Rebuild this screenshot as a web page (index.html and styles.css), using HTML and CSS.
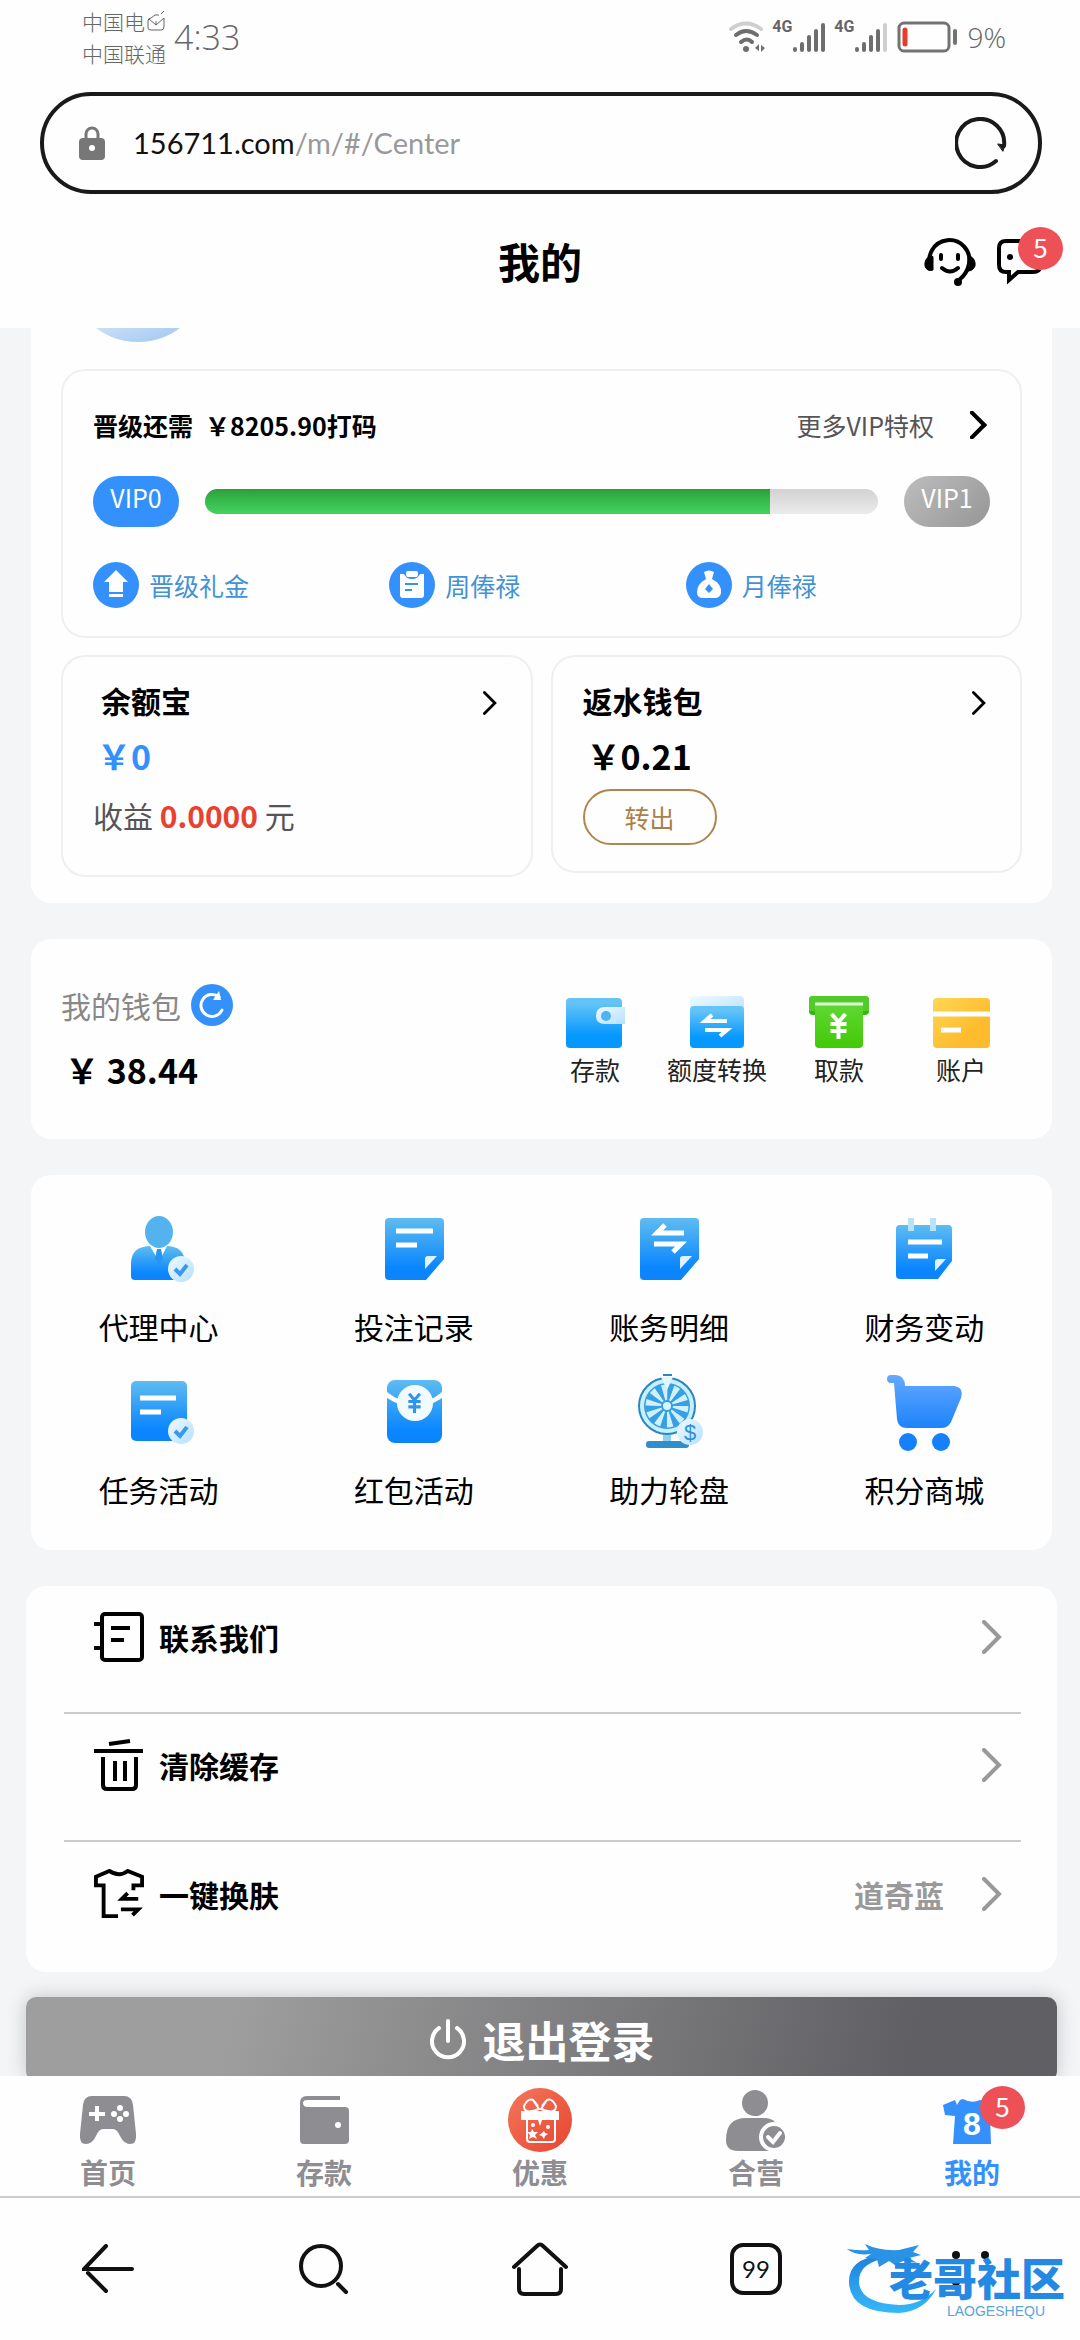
FILE: index.html
```
<!DOCTYPE html>
<html lang="zh-CN">
<head>
    <meta charset="UTF-8">
    <meta name="viewport" content="width=device-width, initial-scale=1.0">
    <title>我的</title>
    <link rel="stylesheet" href="styles.css">
</head>
<body>
    <!-- shared gradients and symbols -->
    <svg class="defs" width="0" height="0" aria-hidden="true">
        <defs>
            <linearGradient id="blue" x1="0" y1="0" x2="0" y2="1">
                <stop offset="0" stop-color="#5ebcf0"/>
                <stop offset="0.8" stop-color="#0a86ff"/>
                <stop offset="1" stop-color="#0c84fa"/>
            </linearGradient>
            <linearGradient id="sky" x1="0" y1="0" x2="0" y2="1">
                <stop offset="0.1" stop-color="#64c4f6"/>
                <stop offset="0.75" stop-color="#0598ff"/>
            </linearGradient>
            <linearGradient id="pale" x1="0" y1="0" x2="1" y2="1">
                <stop offset="0" stop-color="#f0faff"/>
                <stop offset="1" stop-color="#b4e0fc"/>
            </linearGradient>
            <linearGradient id="green" x1="0" y1="0" x2="0" y2="1">
                <stop offset="0" stop-color="#62d836"/>
                <stop offset="1" stop-color="#41c906"/>
            </linearGradient>
            <linearGradient id="gold" x1="0" y1="0" x2="1" y2="1">
                <stop offset="0" stop-color="#ffd655"/>
                <stop offset="0.7" stop-color="#fdbb2d"/>
            </linearGradient>
            <linearGradient id="cart" x1="0" y1="0" x2="0" y2="1">
                <stop offset="0" stop-color="#64a9ff"/>
                <stop offset="1" stop-color="#1d83fb"/>
            </linearGradient>
            <linearGradient id="coral" x1="0" y1="0" x2="1" y2="1">
                <stop offset="0" stop-color="#f2775c"/>
                <stop offset="1" stop-color="#e8452f"/>
            </linearGradient>
            <linearGradient id="mark" x1="0" y1="0" x2="0" y2="1">
                <stop offset="0" stop-color="#2080dc"/>
                <stop offset="1" stop-color="#35b8fa"/>
            </linearGradient>
        </defs>
        <symbol id="chevron" viewBox="0 0 20 34">
            <path d="M2 2L17 17L2 32" fill="none" stroke="currentColor" stroke-linecap="round"/>
        </symbol>
        <symbol id="yen" viewBox="0 0 18 26">
            <path d="M2 1L9 9L16 1M9 9V26M1 11H17M1 18H17" fill="none" stroke="currentColor" stroke-width="4"/>
        </symbol>
    </svg>

    <header class="status-bar">
        <div class="carriers">
            <div class="carrier">中国电
                <svg width="20" height="22" viewBox="0 0 20 22" fill="none" stroke="currentColor" stroke-width="1"><path d="M5 8Q2 8 2 11V18Q2 20 5 20H15Q18 20 18 17V8L10 15L3 9M5 8L9 5H13M15 4L18 1M10 15V11"/></svg>
            </div>
            <div class="carrier">中国联通</div>
        </div>
        <time class="clock">4:33</time>
        <div class="status-icons">
            <svg width="38" height="32" viewBox="0 0 38 32" fill="none" stroke-width="4" stroke-linecap="round">
                <path d="M3 8Q18-3 33 8" stroke="#cfcfcf"/>
                <path d="M8 14Q18 6 29 14M13 21Q19 16 24 21" stroke="#6e6e6e"/>
                <circle cx="18" cy="28" r="3" fill="#6e6e6e"/>
                <path d="M27 27L31 23V30ZM33 24L37 27L33 31Z" fill="#6e6e6e"/>
            </svg>
            <span class="net">4G</span>
            <svg width="34" height="32" viewBox="0 0 34 32" stroke="#6e6e6e" stroke-width="4" stroke-linecap="round"><path d="M3 28V29M10 23V29M17 16V29M24 10V29M31 4V29"/></svg>
            <span class="net net-2">4G</span>
            <svg width="34" height="32" viewBox="0 0 34 32" stroke="#6e6e6e" stroke-width="4" stroke-linecap="round"><path d="M3 28V29M10 23V29M17 16V29M24 10V29"/><path d="M31 4V29" stroke="#cfcfcf"/></svg>
            <svg class="battery" width="60" height="32" viewBox="0 0 60 32" fill="none" stroke-linecap="round">
                <rect x="2" y="2" width="50" height="28" rx="5" stroke="#737373" stroke-width="3"/>
                <path d="M58 10V22" stroke="#737373" stroke-width="4"/>
                <path d="M8 9V23" stroke="#e93a2c" stroke-width="5"/>
            </svg>
            <span class="battery-text">9%</span>
        </div>
    </header>

    <div class="address-row">
        <div class="address-bar">
            <svg width="26" height="36" viewBox="0 0 26 36"><path d="M7 14V9a6 6 0 0 1 12 0V14" fill="none" stroke="#777" stroke-width="3"/><rect y="13" width="26" height="22" rx="4" fill="#777"/><circle cx="13" cy="23" r="3" fill="#fff"/></svg>
            <button type="button" class="url">156711.com<span class="url-path">/m/#/Center</span></button>
            <button type="button" class="icon-button" aria-label="刷新">
                <svg width="52" height="52" viewBox="0 0 52 52" fill="none" stroke="#1a1a1a" stroke-width="4" stroke-linecap="round"><path d="M41 44A24 24 0 1 1 49 29"/><path d="M43 27L50 28L48 34Z" fill="#1a1a1a" stroke-width="1"/></svg>
            </button>
        </div>
    </div>

    <div class="page-header">
        <h1>我的</h1>
        <nav class="header-actions">
            <a href="#service" aria-label="客服">
                <svg width="52" height="52" viewBox="0 0 52 52" fill="none" stroke="#000" stroke-width="4" stroke-linecap="round">
                    <path d="M7 33A20 20 0 1 1 45 29Q43 39 35 45"/>
                    <path d="M6 21Q0 24 1 31Q3 37 9 35V22ZM46 21Q52 24 51 31Q49 36 44 36V22Z" fill="#000" stroke-width="1"/>
                    <circle cx="34" cy="47" r="4" fill="#000" stroke="none"/>
                    <path d="M17 20V24M34 20V24M18 33Q26 40 34 33"/>
                </svg>
            </a>
            <a href="#messages" class="has-badge" aria-label="消息">
                <svg width="46" height="48" viewBox="0 0 46 48" fill="none" stroke="#000" stroke-width="4"><path d="M40 4H9Q2 4 2 11V28Q2 35 9 35H12V43L21 35H36Q43 35 43 29"/><circle cx="13" cy="20" r="3" fill="#000" stroke="none"/></svg>
                <span class="badge">5</span>
            </a>
        </nav>
    </div>

    <main class="content">
        <section class="card profile">
            <div class="avatar-strip"><div class="avatar"></div></div>

            <div class="panel vip">
                <div class="vip-head">
                    <strong>晋级还需<span class="needed">￥8205.90打码</span></strong>
                    <a href="#vip" class="vip-more">更多VIP特权 <svg class="chevron-vip" width="17" height="28"><use href="#chevron"/></svg></a>
                </div>
                <div class="vip-progress">
                    <span class="level">VIP0</span>
                    <div class="track" role="progressbar" aria-valuenow="84" aria-valuemin="0" aria-valuemax="100" aria-label="晋级进度"><div class="fill" style="width: 84%"></div></div>
                    <span class="level level-next">VIP1</span>
                </div>
                <div class="rewards">
                    <a href="#upgrade">
                        <svg width="46" height="46" viewBox="0 0 46 46"><circle cx="23" cy="23" r="23" fill="#3490fa"/><path d="M23 8L35 20H30V30H16V20H11ZM16 32H30V35H16Z" fill="#fff"/></svg>
                        晋级礼金
                    </a>
                    <a href="#week">
                        <svg width="46" height="46" viewBox="0 0 46 46"><circle cx="23" cy="23" r="23" fill="#3490fa"/><path d="M11 12H15Q17 17 23 17Q29 17 31 12H35V33Q35 36 32 36H14Q11 36 11 33Z" fill="#fff"/><rect x="17" y="9" width="12" height="6" rx="2" fill="#fff"/><path d="M16 22H29M16 28H23" stroke="#3490fa" stroke-width="2"/></svg>
                        周俸禄
                    </a>
                    <a href="#month">
                        <svg width="46" height="46" viewBox="0 0 46 46"><circle cx="23" cy="23" r="23" fill="#3490fa"/><path d="M18 10Q23 7 28 10L26 17Q36 22 35 31Q34 36 29 36H17Q11 36 11 30Q11 22 20 17Z" fill="#fff"/><path d="M23 22L27 27L23 31L19 27Z" fill="#3490fa"/></svg>
                        月俸禄
                    </a>
                </div>
            </div>

            <div class="purses">
                <div class="panel purse purse-balance">
                    <a href="#yuebao" class="purse-title">余额宝 <svg width="14" height="24"><use href="#chevron"/></svg></a>
                    <p class="amount amount-blue">￥0</p>
                    <p class="income">收益 <b>0.0000</b> 元</p>
                </div>
                <div class="panel purse purse-rebate">
                    <a href="#rebate" class="purse-title">返水钱包 <svg width="14" height="24"><use href="#chevron"/></svg></a>
                    <p class="amount">￥0.21</p>
                    <button type="button" class="transfer">转出</button>
                </div>
            </div>
        </section>

        <section class="card wallet">
            <div class="wallet-info">
                <div class="wallet-title">我的钱包
                    <button type="button" class="icon-button" aria-label="刷新余额">
                        <svg width="42" height="42" viewBox="0 0 42 42"><circle cx="21" cy="21" r="21" fill="#3490fa"/><path d="M31 26A11 11 0 1 1 28 13" fill="none" stroke="#fff" stroke-width="3" stroke-linecap="round"/><path d="M28 7L30 16L22 16Z" fill="#fff"/></svg>
                    </button>
                </div>
                <p class="amount">￥ 38.44</p>
            </div>
            <nav class="wallet-actions">
                <a href="#deposit">
                    <svg width="60" height="52" viewBox="0 0 60 52"><rect x="1" y="2" width="56" height="50" rx="4" fill="url(#sky)"/><path d="M60 11H40Q31 11 31 20Q31 28 40 28H60Z" fill="url(#pale)"/><circle cx="41" cy="20" r="5" fill="#4db2f6"/></svg>
                    存款
                </a>
                <a href="#convert">
                    <svg width="60" height="52" viewBox="0 0 60 52"><rect x="3" width="54" height="20" rx="4" fill="url(#pale)"/><rect x="3" y="10" width="54" height="42" rx="4" fill="url(#sky)"/><path d="M40 25H18L25 19M18 34H40L33 40" fill="none" stroke="#fff" stroke-width="4"/></svg>
                    额度转换
                </a>
                <a href="#withdraw">
                    <svg width="60" height="52" viewBox="0 0 60 52"><rect width="60" height="19" rx="4" fill="#35b516"/><path d="M6 6H54V48Q54 52 50 52H10Q6 52 6 48Z" fill="url(#green)"/><path d="M4 0H56Q60 0 60 4V15H54V6H6V15H0V4Q0 0 4 0Z" fill="#50cb27"/><path d="M6 8H54" stroke="#dff8d5" stroke-width="3"/><svg x="20" y="17" width="19" height="26" color="#fff"><use href="#yen"/></svg></svg>
                    取款
                </a>
                <a href="#account">
                    <svg width="60" height="52" viewBox="0 0 60 52"><rect x="2" y="2" width="57" height="50" rx="4" fill="url(#gold)"/><path d="M2 18H59" stroke="#fff" stroke-width="5"/><path d="M10 34H30" stroke="#fff" stroke-width="5"/></svg>
                    账户
                </a>
            </nav>
        </section>

        <nav class="card services">
            <a href="#agent">
                <svg width="80" height="80" viewBox="0 0 80 80"><path d="M12 67V55Q12 37 32 37H47Q66 37 66 55V71H16Q12 71 12 67Z" fill="url(#blue)"/><path d="M31 37L38 49L40 42L42 49L48 37Z" fill="#fff"/><path d="M38 40H42L44 50L40 55L36 50Z" fill="#2795f5"/><ellipse cx="40" cy="23" rx="14" ry="16" fill="#53b3ef"/><circle cx="62" cy="60" r="13" fill="url(#pale)"/><path d="M56 60L61 65L68 56" fill="none" stroke="#3a99e9" stroke-width="4"/></svg>
                代理中心
            </a>
            <a href="#bets">
                <svg width="80" height="80" viewBox="0 0 80 80"><path d="M15 9H66Q70 9 70 13V50L52 71H15Q11 71 11 67V13Q11 9 15 9Z" fill="url(#blue)"/><path d="M22 22H59M22 36H43" stroke="#fff" stroke-width="5"/><path d="M51 60V50Q51 47 54 47H63Z" fill="#dff3ff"/></svg>
                投注记录
            </a>
            <a href="#ledger">
                <svg width="80" height="80" viewBox="0 0 80 80"><path d="M15 9H66Q70 9 70 13V50L52 71H15Q11 71 11 67V13Q11 9 15 9Z" fill="url(#blue)"/><path d="M55 24H28L36 16M25 35H52L44 43" fill="none" stroke="#fff" stroke-width="5"/><path d="M51 60V50Q51 47 54 47H63Z" fill="#dff3ff"/></svg>
                账务明细
            </a>
            <a href="#finance">
                <svg width="80" height="80" viewBox="0 0 80 80"><path d="M16 16H64Q68 16 68 20V52L54 70H16Q12 70 12 66V20Q12 16 16 16Z" fill="url(#blue)"/><path d="M27 9V22M49 9V22" stroke="#b8e2f8" stroke-width="6"/><path d="M24 33H58M24 47H44" stroke="#fff" stroke-width="5"/><path d="M51 62V53Q51 50 54 50H62Z" fill="#dff3ff"/></svg>
                财务变动
            </a>
            <a href="#tasks">
                <svg width="80" height="80" viewBox="0 0 80 80"><rect x="12" y="9" width="56" height="60" rx="5" fill="url(#blue)"/><path d="M21 26H57M21 40H42" stroke="#fff" stroke-width="5"/><circle cx="62" cy="59" r="13" fill="url(#pale)"/><path d="M56 59L61 64L68 55" fill="none" stroke="#3a99e9" stroke-width="4"/></svg>
                任务活动
            </a>
            <a href="#redpacket">
                <svg width="80" height="80" viewBox="0 0 80 80"><rect x="13" y="8" width="55" height="63" rx="8" fill="url(#blue)"/><path d="M13 20Q27 31 41 31Q55 31 68 20V26Q55 35 41 35Q27 35 13 26Z" fill="#fff"/><circle cx="41" cy="31" r="18" fill="#f1faff"/><svg x="33" y="21" width="15" height="20" color="#2f95ec"><use href="#yen"/></svg></svg>
                红包活动
            </a>
            <a href="#wheel">
                <svg width="80" height="80" viewBox="0 0 80 80">
                    <path d="M34 60H42V70H34Z" fill="#8fd0ee"/><rect x="17" y="69" width="43" height="7" rx="3" fill="#2f8fcb"/>
                    <circle cx="38" cy="34" r="28" fill="#c5f0fd" stroke="#2b86c2" stroke-width="2"/><circle cx="38" cy="34" r="23" fill="#399ee2"/>
                    <circle cx="38" cy="34" r="13" fill="none" stroke="#cdf2fd" stroke-width="17" stroke-dasharray="4 4.168"/>
                    <circle cx="38" cy="34" r="6" fill="#399ee2"/><circle cx="38" cy="34" r="4" fill="#d8f6ff"/>
                    <path d="M32 5H44L38 18Z" fill="#dff7ff"/><path d="M34 3H43" stroke="#2b86c2" stroke-width="2"/>
                    <circle cx="61" cy="60" r="13" fill="url(#pale)"/><text x="61" y="68" class="dollar">$</text>
                </svg>
                助力轮盘
            </a>
            <a href="#mall">
                <svg width="80" height="80" viewBox="0 0 80 80"><path d="M7 3H12Q21 4 21 14H70Q80 15 77 26L67 50Q64 56 57 56H23Q14 56 13 47L10 11H7A4 4 0 0 1 7 3Z" fill="url(#cart)"/><circle cx="24" cy="70" r="9" fill="#1480fb"/><circle cx="57" cy="70" r="9" fill="#1480fb"/></svg>
                积分商城
            </a>
        </nav>

        <section class="card settings">
            <a href="#contact">
                <svg width="50" height="50" viewBox="0 0 50 50" fill="none" stroke="#000" stroke-width="4"><rect x="8" y="2" width="40" height="46" rx="3"/><path d="M0 12H8M0 36H8M17 16H36M17 28H30"/></svg>
                <span>联系我们</span>
                <svg class="chevron" width="20" height="34"><use href="#chevron"/></svg>
            </a>
            <a href="#cache">
                <svg width="50" height="52" viewBox="0 0 50 52" fill="none" stroke="#000" stroke-width="4"><path d="M15 5L36 2M0 12H49M9 18V46Q9 50 13 50H38Q42 50 42 46V18M21 22V42M31 22V42"/></svg>
                <span>清除缓存</span>
                <svg class="chevron" width="20" height="34"><use href="#chevron"/></svg>
            </a>
            <a href="#skin">
                <svg width="50" height="50" viewBox="0 0 52 52" fill="none" stroke="#000" stroke-width="4"><path d="M25 49H10V17H2V8L16 2Q26 9 35 2L50 8V17H41V22M46 31H29L35 25M28 42H46L40 48"/></svg>
                <span>一键换肤</span>
                <em>道奇蓝</em>
                <svg class="chevron" width="20" height="34"><use href="#chevron"/></svg>
            </a>
        </section>

        <button type="button" class="logout">
            <svg width="38" height="42" viewBox="0 0 38 42" fill="none" stroke="#fff" stroke-width="5" stroke-linecap="round"><path d="M10 10A16 16 0 1 0 28 10M19 3V23"/></svg>
            退出登录
        </button>
    </main>

    <nav class="tab-bar">
        <a href="#home">
            <svg width="60" height="48" viewBox="0 0 60 48"><path d="M14 0H46Q54 0 55 9L58 38Q59 48 52 48Q46 48 42 40Q39 33 35 33H25Q21 33 18 40Q14 48 8 48Q1 48 2 38L5 9Q6 0 14 0Z" fill="#8e8d92"/><path d="M19 10V25M11 18H27" stroke="#fff" stroke-width="4"/><g fill="#fff"><circle cx="42" cy="12" r="3"/><circle cx="42" cy="23" r="3"/><circle cx="36" cy="18" r="3"/><circle cx="48" cy="18" r="3"/></g></svg>
            首页
        </a>
        <a href="#pay">
            <svg width="50" height="48" viewBox="0 0 50 48"><path d="M8 0H41V4H8Q4 4 4 7Q4 11 9 11H46Q50 11 50 15V44Q50 48 46 48H5Q1 48 1 44V7Q1 0 8 0Z" fill="#8e8d92"/><circle cx="39" cy="29" r="3" fill="#fff"/></svg>
            存款
        </a>
        <a href="#promo">
            <svg class="tall" width="64" height="64" viewBox="0 0 64 64"><circle cx="32" cy="32" r="32" fill="url(#coral)"/><path d="M19 30V51Q19 54 22 54H44Q47 54 47 51V30M31 21Q16 27 16 18Q20 10 25 12ZM33 21Q48 27 48 18Q44 10 39 12ZM25 12L30 18M39 12L34 18" fill="none" stroke="#fff" stroke-width="2"/><path d="M13 23H51V32H13Z" fill="#fff"/><path d="M24 41L26 44L30 44L27 47L29 51L25 49L21 51L22 47L19 44L23 44ZM36 43L37 45L40 46L37 48L36 51L34 48L31 47L34 45ZM30 32H34L32 38Z" fill="#fff"/><circle cx="25" cy="37" r="2" fill="#fff"/><circle cx="40" cy="39" r="2" fill="#fff"/></svg>
            优惠
        </a>
        <a href="#partner">
            <svg class="tall" width="60" height="62" viewBox="0 0 60 62"><circle cx="29" cy="13" r="13" fill="#8e8d92"/><path d="M20 28H38Q52 28 54 44V61H12Q0 61 0 50Q0 28 20 28Z" fill="#8e8d92"/><circle cx="48" cy="47" r="13" fill="#8e8d92" stroke="#fff" stroke-width="4"/><path d="M42 47L47 52L54 43" fill="none" stroke="#fff" stroke-width="4" stroke-linecap="round"/></svg>
            合营
        </a>
        <a href="#mine" class="active">
            <span class="has-badge">
                <svg width="58" height="48" viewBox="0 0 58 48"><path d="M0 9L12 4L14 9L17 4L20 3Q29 8 37 4L57 9V20H47L48 48H10L12 20L2 19Z" fill="#3490fa"/><text x="29" y="39" class="shirt-number">8</text></svg>
                <span class="badge">5</span>
            </span>
            我的
        </a>
    </nav>

    <footer class="browser-bar">
        <button type="button" class="icon-button" aria-label="后退"><svg width="52" height="50" viewBox="0 0 52 50"><path d="M24 2L2 25H50M6 29L24 47"/></svg></button>
        <button type="button" class="icon-button" aria-label="搜索"><svg width="52" height="52" viewBox="0 0 52 52"><circle cx="23" cy="23" r="20"/><path d="M40 41L48 49"/></svg></button>
        <button type="button" class="icon-button" aria-label="主页"><svg width="56" height="54" viewBox="0 0 56 54"><path d="M2 25L25 4Q28 1 31 4L54 25M7 27V47Q7 52 12 52H44Q49 52 49 47V27"/></svg></button>
        <button type="button" class="tabs-button" aria-label="99 个标签页">99</button>
        <button type="button" class="icon-button" aria-label="更多"><svg width="52" height="52" viewBox="0 0 52 52"><g fill="#111" stroke="none"><circle cx="10" cy="12" r="4"/><circle cx="39" cy="12" r="4"/><circle cx="10" cy="39" r="4"/></g></svg></button>
        <div class="watermark">
            <svg width="100" height="74" viewBox="0 0 100 74"><path d="M34 12Q2 16 2 38Q2 70 52 70Q78 68 89 46Q74 62 52 62Q12 60 12 38Q12 22 34 16Z" fill="url(#mark)"/><path d="M0 6Q14 8 22 7L18 1Q32 8 52 7L72 2L66 9L74 12L62 15L70 20L56 18L48 22L42 18L32 24L30 16L18 15L24 11Q8 13 0 6Z" fill="#2a93e6"/></svg>
            <div class="watermark-text">
                <strong>老哥社区</strong>
                <small>LAOGESHEQU</small>
            </div>
        </div>
    </footer>
</body>
</html>
```
FILE: styles.css
```
:root {
    --blue: #3490fa;
    --link-blue: #4292d6;
    --red: #ee5057;
    --page-bg: #f4f5f7;
    --line: #efefef;
    --grey: #8e8d92;
}

* {
    margin: 0;
    padding: 0;
    box-sizing: border-box;
}

body {
    height: 100vh;
    display: flex;
    flex-direction: column;
    overflow: hidden;
    font-family: "Noto Sans CJK SC", sans-serif;
    font-size: 25px;
    line-height: 40px;
    color: #000;
    background: #fefefe;
}

a {
    color: inherit;
    text-decoration: none;
}

button {
    font: inherit;
    color: inherit;
    background: none;
    border: none;
    cursor: pointer;
}

svg {
    display: block;
    flex-shrink: 0;
    stroke-width: 4;
}

.defs {
    position: absolute;
}

.icon-button {
    display: flex;
    align-items: center;
    justify-content: center;
}

/* status bar */
.status-bar {
    display: flex;
    align-items: center;
    height: 74px;
    padding: 0 74px 0 82px;
    color: #666;
}

.status-bar svg {
    stroke-width: revert-layer;
}

.carrier {
    display: flex;
    align-items: center;
    gap: 1px;
    font-size: 21px;
    font-weight: 300;
    line-height: 32px;
}

.carrier svg {
    stroke-width: 1;
}

.clock {
    margin-left: 8px;
    font-family: "Open Sans", sans-serif;
    font-size: 34px;
    font-weight: 300;
}

.status-icons {
    display: flex;
    align-items: center;
    margin-left: auto;
}

.net {
    align-self: flex-start;
    margin-left: 6px;
    font-family: Roboto, sans-serif;
    font-size: 16px;
    font-weight: 700;
    line-height: 20px;
}

.net-2 {
    margin-left: 8px;
}

.battery {
    margin: 0 10px 0 9px;
}

.battery-text {
    font-family: "Open Sans", sans-serif;
    font-size: 28px;
    font-weight: 300;
}

/* address bar */
.address-row {
    padding: 18px 38px 0 40px;
}

.address-bar {
    display: flex;
    align-items: center;
    height: 102px;
    padding: 0 31px 0 35px;
    border: 4px solid #1a1a1a;
    border-radius: 51px;
}

.url {
    flex: 1;
    margin-left: 28px;
    font-family: Lato, sans-serif;
    font-size: 29px;
    text-align: left;
    color: #111;
}

.url-path {
    color: #999;
}

/* page header */
.page-header {
    display: grid;
    grid-template-columns: 1fr auto 1fr;
    align-items: center;
    height: 134px;
    padding: 0 37px;
}

.page-header h1 {
    grid-column: 2;
    font-size: 42px;
    line-height: 60px;
}

.header-actions {
    display: flex;
    align-items: center;
    justify-content: flex-end;
    gap: 21px;
}

.has-badge {
    position: relative;
}

.badge {
    position: absolute;
    top: -10px;
    right: -20px;
    width: 45px;
    height: 43px;
    border-radius: 50%;
    background: var(--red);
    color: #fff;
    font-size: 26px;
    font-weight: 400;
    line-height: 40px;
    text-align: center;
}

/* content */
.content {
    flex: 1;
    min-height: 0;
    overflow: hidden;
    padding: 0 23px 0 26px;
    background: var(--page-bg);
}

.card {
    margin: 0 5px 36px;
    border-radius: 20px;
    background: #fefefe;
}

.profile {
    padding: 0 30px 26px;
    border-radius: 0 0 20px 20px;
}

.avatar-strip {
    display: flex;
    align-items: flex-end;
    height: 14px;
    margin: 0 7px 27px;
    overflow: hidden;
}

.avatar {
    width: 140px;
    height: 140px;
    border-radius: 50%;
    background: linear-gradient(160deg, #dcebfc 60%, #a9ccf2 90%, #dcebfc);
}

.panel {
    border: 2px solid var(--line);
    border-radius: 24px;
}

.vip {
    padding: 34px 30px 28px;
}

.vip-head {
    display: flex;
    align-items: center;
    justify-content: space-between;
}

.needed {
    margin-left: 12px;
}

.vip-more {
    display: flex;
    align-items: center;
    gap: 36px;
    padding-right: 3px;
    color: #555;
}

.chevron-vip {
    color: #000;
    stroke-width: 5;
}

.vip-progress {
    display: flex;
    align-items: center;
    gap: 26px;
    margin-top: 31px;
}

.level {
    width: 86px;
    height: 51px;
    border-radius: 26px;
    background: var(--blue);
    color: #fff;
    line-height: 43px;
    text-align: center;
}

.level-next {
    background: linear-gradient(135deg, #bdbdbd, #969696);
}

.track {
    flex: 1;
    height: 25px;
    border-radius: 13px;
    overflow: hidden;
    background: linear-gradient(#d2d2d2, #ebebeb);
}

.fill {
    height: 100%;
    background: linear-gradient(#2f9a40, #31b044 25%, #45d25f);
}

.rewards {
    display: grid;
    grid-template-columns: repeat(3, 1fr);
    margin: 35px 8px 0 0;
    color: var(--link-blue);
}

.rewards a {
    display: flex;
    align-items: center;
    gap: 10px;
}

.purses {
    display: grid;
    grid-template-columns: 1fr 1fr;
    align-items: start;
    gap: 18px;
    margin-top: 17px;
}

.purse {
    padding: 23px 30px 26px;
}

.purse-balance {
    padding-bottom: 40px;
}

.purse-title {
    display: flex;
    align-items: center;
    justify-content: space-between;
    padding-right: 4px;
    font-size: 30px;
    font-weight: 700;
}

.purse-title svg {
    margin-top: 6px;
}

.purse-balance .purse-title {
    padding-left: 8px;
}

.amount {
    padding-left: 4px;
    font-size: 34px;
    font-weight: 700;
}

.purse .amount {
    margin-top: 16px;
}

.amount-blue {
    color: var(--blue);
}

.income {
    margin-top: 19px;
    font-size: 30px;
    color: #555;
}

.income b {
    color: #e8412f;
}

.transfer {
    margin-top: 13px;
    width: 134px;
    height: 56px;
    border: 2px solid #b08650;
    border-radius: 28px;
    color: #ab7f49;
}

/* wallet */
.wallet {
    display: flex;
    align-items: flex-end;
    justify-content: space-between;
    padding: 45px 30px 49px;
}

.wallet-title {
    display: flex;
    align-items: center;
    gap: 10px;
    margin-bottom: 24px;
    font-size: 30px;
    color: #888;
}

.wallet-actions {
    display: grid;
    grid-template-columns: repeat(4, 122px);
    line-height: 42px;
    color: #222;
}

.wallet-actions a,
.services a {
    display: flex;
    flex-direction: column;
    align-items: center;
}

/* services */
.services {
    display: grid;
    grid-template-columns: repeat(4, 1fr);
    row-gap: 26px;
    padding: 34px 0 41px;
    font-size: 30px;
}

.services a {
    gap: 17px;
}

.dollar {
    font-family: "Liberation Sans", sans-serif;
    font-size: 22px;
    text-anchor: middle;
    fill: #318fd6;
}

/* settings list */
.settings {
    margin: 0 0 25px;
    padding: 0 36px 2px 38px;
}

.settings a {
    display: flex;
    align-items: center;
    height: 128px;
    padding: 0 19px 24px 30px;
    border-bottom: 2px solid #ccc;
    font-size: 30px;
    font-weight: 700;
}

.settings a:last-child {
    border-bottom: none;
}

.settings span {
    margin-left: 15px;
}

.settings em {
    margin-left: auto;
    margin-right: 38px;
    font-style: normal;
    color: #999;
}

.settings .chevron {
    margin-left: auto;
    color: #999;
}

.settings em + .chevron {
    margin-left: 0;
}

.logout {
    display: flex;
    align-items: center;
    justify-content: center;
    gap: 16px;
    width: 100%;
    height: 84px;
    border-radius: 10px;
    background: linear-gradient(105deg, #9e9e9e 20%, #606064 85%);
    box-shadow: 0 0 20px rgba(0, 0, 0, 0.2);
    color: #fff;
    font-size: 43px;
    font-weight: 700;
}

/* tab bar */
.tab-bar {
    display: grid;
    grid-template-columns: repeat(5, 1fr);
    height: 122px;
    padding-bottom: 4px;
    border-bottom: 2px solid #ccc;
    font-size: 28px;
    font-weight: 700;
    color: var(--grey);
    z-index: 1;
    background: #fefefe;
}

.tab-bar a {
    display: flex;
    flex-direction: column;
    align-items: center;
    justify-content: flex-end;
    gap: 8px;
}

.tab-bar a:has(.tall) {
    gap: 0;
}

.tab-bar .active {
    color: var(--blue);
}

.shirt-number {
    font-family: "Liberation Sans", sans-serif;
    font-size: 32px;
    text-anchor: middle;
    fill: #fff;
}

.tab-bar .badge {
    right: -24px;
}

/* browser bar */
.browser-bar {
    position: relative;
    display: grid;
    grid-template-columns: repeat(5, 1fr);
    align-items: center;
    justify-items: center;
    height: 142px;
    background: #fefefe;
}

.browser-bar button svg {
    fill: none;
    stroke: #111;
    stroke-linecap: round;
}

.tabs-button {
    width: 52px;
    height: 52px;
    border: 4px solid #111;
    border-radius: 13px;
    font-family: Lato, sans-serif;
    font-size: 24px;
    line-height: 40px;
    color: #111;
}

.watermark {
    position: absolute;
    right: 15px;
    bottom: 22px;
    display: flex;
}

.watermark-text {
    display: flex;
    flex-direction: column;
    align-items: flex-end;
    margin-left: -58px;
    padding-top: 7px;
    color: #2489e2;
}

.watermark-text strong {
    font-size: 44px;
    font-weight: 900;
    line-height: 54px;
}

.watermark-text small {
    padding-right: 20px;
    font-family: "Liberation Sans", sans-serif;
    font-size: 14px;
    line-height: 14px;
    color: #5ba4da;
}
```
